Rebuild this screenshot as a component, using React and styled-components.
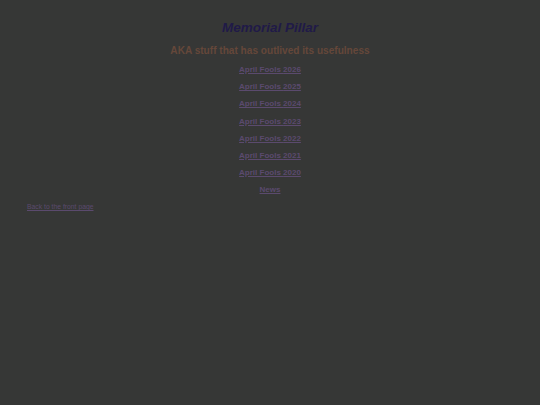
import React from "react"
import styled, { createGlobalStyle } from "styled-components"

const Global = createGlobalStyle`
	html, body {
		margin: 0;
		background: #363736;
	}
	body {
		font-family: "Liberation Sans", Arial, sans-serif;
		min-height: 405px;
	}
`

const Page = styled.div`
	padding: 19px 27px 0;
`

const Title = styled.h1`
	margin: 0;
	text-align: center;
	font-size: 13.5px;
	font-style: italic;
	font-weight: bold;
	color: #201a48;
	line-height: 18px;
`

const Subtitle = styled.h2`
	margin: 7px 0 0;
	text-align: center;
	font-size: 10.1px;
	font-weight: bold;
	color: #65473a;
	line-height: 14px;
`

const LinkList = styled.nav`
	display: flex;
	flex-direction: column;
	align-items: center;
	gap: 7.2px;
	margin-top: 7px;
`

const Link = styled.a`
	font-size: 8px;
	font-weight: bold;
	line-height: 10px;
	color: #5b4a6e;
	text-decoration: underline;
`

const Back = styled.a`
	display: inline-block;
	margin-top: 4px;
	font-size: 6.8px;
	line-height: 9px;
	color: #5b4a6e;
	text-decoration: underline;
`

const years = [2026, 2025, 2024, 2023, 2022, 2021, 2020]

export default function App() {
	return (
		<Page>
			<Global />
			<Title>Memorial Pillar</Title>
			<Subtitle>AKA stuff that has outlived its usefulness</Subtitle>
			<LinkList>
				{years.map(y => (
					<Link key={y} href="#">April Fools {y}</Link>
				))}
				<Link href="#">News</Link>
			</LinkList>
			<Back href="#">Back to the front page</Back>
		</Page>
	)
}
